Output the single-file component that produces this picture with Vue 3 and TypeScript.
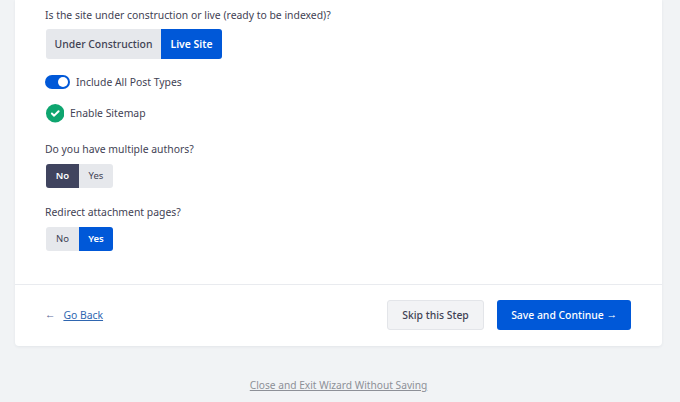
<script setup lang="ts">
import { ref } from 'vue'

const siteMode = ref('live')
const authors = ref('no')
const redirect = ref('yes')
</script>

<template>
  <main class="page">
    <section class="card">
      <div class="body">
        <p class="question first">Is the site under construction or live (ready to be indexed)?</p>
        <div class="segment large">
          <button class="seg" :class="{ active: siteMode === 'construction' }" @click="siteMode = 'construction'">Under Construction</button>
          <button class="seg" :class="{ active: siteMode === 'live' }" @click="siteMode = 'live'">Live Site</button>
        </div>
        <div class="toggle-row">
          <span class="toggle"><span class="knob"></span></span>
          <span>Include All Post Types</span>
        </div>
        <div class="check-row">
          <svg class="check" viewBox="0 0 20 20" width="18.5" height="18.5" aria-hidden="true">
            <circle cx="10" cy="10" r="10" fill="#0ea56f" />
            <path d="M6.4 10.3l2.4 2.3L13.6 7.8" fill="none" stroke="#fff" stroke-width="2.2" stroke-linecap="round" stroke-linejoin="round" />
          </svg>
          <span class="check-label">Enable Sitemap</span>
        </div>
        <p class="question authors">Do you have multiple authors?</p>
        <div class="segment small">
          <button class="seg" :class="{ dark: authors === 'no' }" @click="authors = 'no'">No</button>
          <button class="seg" :class="{ dark: authors === 'yes' }" @click="authors = 'yes'">Yes</button>
        </div>
        <p class="question redirect">Redirect attachment pages?</p>
        <div class="segment small">
          <button class="seg" :class="{ active: redirect === 'no' }" @click="redirect = 'no'">No</button>
          <button class="seg" :class="{ active: redirect === 'yes' }" @click="redirect = 'yes'">Yes</button>
        </div>
      </div>
      <footer class="actions">
        <div class="back"><span class="arrow">←</span><a href="#">Go Back</a></div>
        <div class="buttons">
          <button class="skip">Skip this Step</button>
          <button class="save">Save and Continue <span class="next">→</span></button>
        </div>
      </footer>
    </section>
    <a class="exit" href="#">Close and Exit Wizard Without Saving</a>
  </main>
</template>

<style>
html, body { margin: 0; background: #f1f3f5; }
</style>

<style scoped>
.page {
  width: 680px;
  height: 402px;
  overflow: hidden;
  box-sizing: border-box;
  padding: 0 18px 0 15px;
  background: #f1f3f5;
  font-family: "Noto Sans", Roboto, sans-serif;
  font-size: 10.4px;
  line-height: 14px;
  color: #3f4254;
  display: flex;
  flex-direction: column;
}
.card {
  height: 346px;
  flex: none;
  background: #fff;
  border-radius: 0 0 4px 4px;
  box-shadow: 0 1px 3px rgba(40, 50, 80, 0.07);
  display: flex;
  flex-direction: column;
}
.body { height: 284px; box-sizing: border-box; padding: 8px 30px 0; flex: none; }
.question { margin: 0; font-weight: 400; }
.segment { display: flex; width: fit-content; margin-left: 1px; border-radius: 3px; overflow: hidden; background: #e6e8ec; }
.seg {
  border: 0;
  padding: 0;
  background: transparent;
  font: inherit;
  font-weight: 500;
  color: #3f4254;
  cursor: pointer;
}
.large { margin-top: 7px; height: 30px; }
.large .seg:first-child { width: 115px; }
.large .seg:last-child { width: 61px; }
.small { margin-top: 8px; height: 24px; font-size: 9.5px; }
.small .seg { font-weight: 400; }
.small .seg:first-child { width: 33px; }
.small .seg:last-child { width: 34px; }
.seg.active { background: #0058d8; color: #fff; font-weight: 600; }
.small .seg.active, .small .seg.dark { font-weight: 600; }
.seg.dark { background: #40445f; color: #fff; }
.toggle-row { display: flex; align-items: center; gap: 6px; margin-top: 16px; height: 14px; }
.toggle { width: 25px; height: 14px; border-radius: 7px; background: #0058d8; position: relative; }
.knob { position: absolute; right: 2px; top: 2px; width: 10px; height: 10px; border-radius: 50%; background: #fff; }
.check-row { display: flex; align-items: center; gap: 6px; margin-top: 15px; height: 19px; }
.check { flex: none; margin-left: 0.5px; }
.check-label { margin-top: -1px; }
.authors { margin-top: 19px; }
.redirect { margin-top: 17px; }
.actions {
  flex: 1;
  border-top: 1px solid #e9ebef;
  box-sizing: border-box;
  padding: 15px 31px 0 30px;
  display: flex;
  justify-content: space-between;
  align-items: flex-start;
}
.back { display: flex; align-items: center; gap: 8px; height: 30px; }
.arrow { color: #5f6b9a; font-family: "Liberation Sans", sans-serif; }
.back a { color: #2f66b0; text-decoration: underline; }
.buttons { display: flex; gap: 13px; }
.skip, .save { height: 30px; box-sizing: border-box; border-radius: 3px; font: inherit; font-weight: 500; cursor: pointer; padding: 0; }
.skip { width: 97px; background: #f2f3f5; border: 1px solid #e3e5e9; color: #3f4254; }
.save { width: 134px; background: #0058d8; border: 0; color: #fff; }
.next { font-family: "Liberation Sans", sans-serif; vertical-align: 1px; }
.exit { margin-top: 32px; text-align: center; font-size: 10.2px; color: #8d9097; text-decoration: underline; }
</style>
